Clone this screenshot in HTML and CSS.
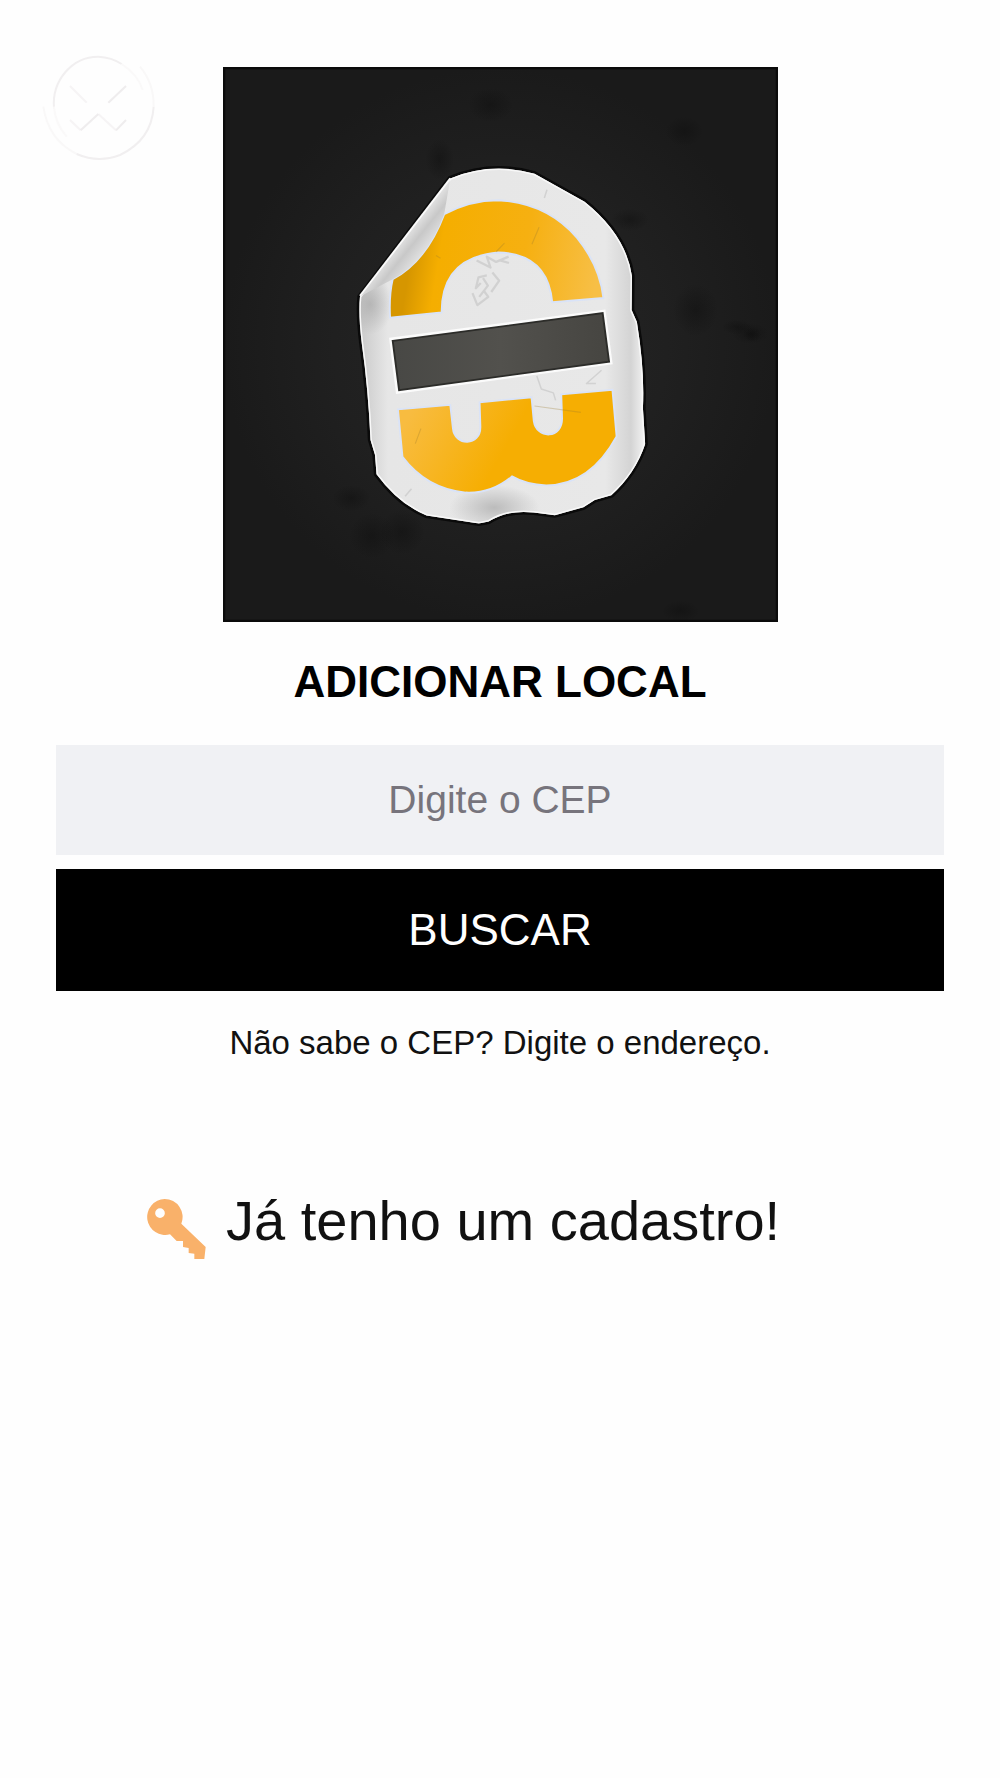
FILE: index.html
```html
<!DOCTYPE html>
<html lang="pt-br">
<head>
	<meta charset="UTF-8">
	<meta name="viewport" content="width=device-width, initial-scale=1">
	<title>Adicionar local</title>
	<link rel="stylesheet" href="styles.css">
</head>
<body>
	<main id="box">
		<div class="topo">
			<button type="button" class="fechar" aria-label="Fechar">
				<svg viewBox="78 48 282 312" fill="none" stroke-width="6">
					<path d="M72 205A133 142 0 0 1 205 50Q245 52 275 72" stroke="#f1eff0"/>
					<path d="M72 200Q75 250 110 290M275 72Q325 105 338 150" stroke="#faf9f9"/>
					<path d="M40 200Q55 300 140 342" stroke="#f9f8f8"/>
					<path d="M140 342Q205 370 270 345Q365 300 371 200" stroke="#f1eff0"/>
					<path d="M371 200Q372 130 330 80" stroke="#f9f8f8"/>
					<path d="M120 138L170 188M120 240L152 271M205 222L258 271" stroke="#f6f4f5"/>
					<path d="M235 188L288 138M152 271L205 222M258 271L288 240" stroke="#efedee"/>
				</svg>
			</button>
			<!-- logo: adesivo sobre fundo escuro -->
			<svg class="logo" viewBox="34 44 1475 1475" role="img" aria-label="Logo">
				<defs>
					<radialGradient id="fundo">
						<stop offset="0" stop-color="#262626"/>
						<stop offset="0.6" stop-color="#202020"/>
						<stop offset="1" stop-color="#1a1a1a"/>
					</radialGradient>
					<linearGradient id="papel">
						<stop offset="0" stop-color="#c9c9c9"/>
						<stop offset="0.1" stop-color="#e6e6e6"/>
						<stop offset="0.86" stop-color="#e8e8e8"/>
						<stop offset="0.95" stop-color="#d4d4d4"/>
						<stop offset="1" stop-color="#f4f4f4"/>
					</linearGradient>
					<linearGradient id="dobra" gradientUnits="userSpaceOnUse" x1="495" y1="490" x2="572" y2="552">
						<stop offset="0" stop-color="#f2f2f2"/>
						<stop offset="0.5" stop-color="#c8c8c8"/>
						<stop offset="1" stop-color="#e8e8e8"/>
					</linearGradient>
					<linearGradient id="arco" gradientUnits="userSpaceOnUse" x1="530" y1="570" x2="1020" y2="650">
						<stop offset="0" stop-color="#d69600"/>
						<stop offset="0.15" stop-color="#f5ae00"/>
						<stop offset="0.6" stop-color="#f6b011"/>
						<stop offset="1" stop-color="#f7bf46"/>
					</linearGradient>
					<linearGradient id="base" gradientUnits="userSpaceOnUse" x1="530" y1="970" x2="760" y2="1100">
						<stop offset="0" stop-color="#f8bc40"/>
						<stop offset="1" stop-color="#f6ae02"/>
					</linearGradient>
					<linearGradient id="barra">
						<stop offset="0" stop-color="#484845"/>
						<stop offset="0.5" stop-color="#52514d"/>
						<stop offset="1" stop-color="#464541"/>
					</linearGradient>
					<radialGradient id="sombra">
						<stop offset="0" stop-color="#a9a9a9" stop-opacity="0.7"/>
						<stop offset="1" stop-color="#a9a9a9" stop-opacity="0"/>
					</radialGradient>
					<radialGradient id="mancha">
						<stop offset="0" stop-color="#0c0c0c" stop-opacity="0.4"/>
						<stop offset="1" stop-color="#0c0c0c" stop-opacity="0"/>
					</radialGradient>
					<clipPath id="recorte">
						<path id="contorno" d="M638 340Q750 295 862 328L995 402Q1105 490 1121 600L1120 690L1134 722Q1155 850 1150 950L1156 1046Q1130 1125 1066 1182L1022 1195L992 1214L916 1235L860 1228Q790 1220 740 1252L714 1257L575 1236Q500 1205 442 1126L438 1075L426 1035Q420 900 403 780Q393 700 398 654Z"/>
					</clipPath>
				</defs>
				<path fill="url(#fundo)" d="M34 44H1509V1519H34z"/>
				<g fill="url(#mancha)">
					<ellipse cx="610" cy="290" rx="38" ry="55"/>
					<ellipse cx="1435" cy="752" rx="48" ry="28"/>
					<ellipse cx="1440" cy="755" rx="24" ry="20"/>
					<ellipse cx="1400" cy="735" rx="40" ry="20"/>
					<ellipse cx="1290" cy="690" rx="60" ry="70"/>
					<ellipse cx="1115" cy="450" rx="50" ry="30"/>
					<ellipse cx="430" cy="1290" rx="60" ry="60"/>
					<ellipse cx="375" cy="1190" rx="50" ry="35"/>
					<ellipse cx="510" cy="1280" rx="60" ry="60"/>
					<ellipse cx="745" cy="145" rx="60" ry="45"/>
					<ellipse cx="1250" cy="1490" rx="50" ry="28"/>
					<ellipse cx="1260" cy="215" rx="50" ry="40"/>
				</g>
				<!-- papel -->
				<use href="#contorno" fill="none" stroke="#0a0a0a" stroke-width="14"/>
				<use href="#contorno" fill="url(#papel)"/>
				<g clip-path="url(#recorte)">
					<ellipse cx="755" cy="1215" rx="120" ry="60" fill="url(#sombra)"/>
					<ellipse cx="425" cy="675" rx="60" ry="80" fill="url(#sombra)"/>
					<use href="#contorno" fill="none" stroke="#f8f8f8" stroke-width="8"/>
				</g>
				<!-- letra de cima -->
				<path fill="url(#arco)" stroke="#d9e3f8" stroke-width="5" d="M485 608Q575 560 622 435Q690 398 765 398Q895 405 975 498Q1035 572 1045 658L909 669Q897 540 765 537Q615 550 615 696L478 710Q475 650 485 608Z"/>
				<path fill="url(#dobra)" d="M638 340L622 435Q575 560 485 608L398 654Z"/>
				<path fill="none" stroke="#fafafa" stroke-width="5" d="M398 652L638 340"/>
				<!-- arranhados -->
				<g fill="none" stroke="#b8b8b8" stroke-width="6" stroke-linejoin="round" opacity="0.45">
					<path d="M708 558L745 577L735 548L760 562L793 548M750 590L768 612L747 642M735 598L713 603L706 632L719 618M697 645L710 677L739 655L728 640M770 558L794 565M725 605L738 625L715 655"/>
					<path stroke-width="4" d="M868 865L880 900L912 910L918 930M1040 850L1000 885L1025 885M895 370L888 392M535 1165L518 1185"/>
				</g>
				<!-- tarja -->
				<path fill="url(#barra)" stroke="#fbfbfb" stroke-width="12" d="M482 769L1045 695L1063 829L499 906Z"/>
				<path fill="url(#barra)" stroke="#2c2c29" stroke-width="5" d="M485 772L1043 698L1060 827L502 903Z"/>
				<!-- letra de baixo -->
				<path fill="url(#base)" stroke="#d9e3f8" stroke-width="5" d="M499 954L638 942L645 1004C649 1053 719 1053 718 1000L716 935L854 922L860 985C867 1034 938 1034 935 975L933 914L1069 902L1080 1026Q1010 1155 893 1156Q840 1154 802 1132Q748 1178 679 1175Q575 1165 511 1080Z"/>
				<path fill="none" stroke="#9b7b30" stroke-width="3" opacity="0.3" d="M862 945L985 962M560 1005L545 1045M782 512L760 535M874 470L855 515M600 545L612 552"/>
				<path fill="none" stroke="#0b0b0b" stroke-width="6" d="M37 47H1506V1516H37z"/>
			</svg>
		</div>
		<h1>ADICIONAR LOCAL</h1>
		<form>
			<input type="text" name="cep" class="campo" placeholder="Digite o CEP" aria-label="Digite o CEP">
			<button type="submit" class="buscar">BUSCAR</button>
		</form>
		<a href="#" class="endereco">Não sabe o CEP? Digite o endereço.</a>
		<a href="#" class="cadastro">
			<svg class="chave" viewBox="48 40 180 180" fill="#f9b16a">
				<path fill-rule="evenodd" d="M104 40A54 54 0 0 1 154 114L227 184L223 220H193V204L176 202V187L159 184V166H140L120 146A54 54 0 1 1 104 40ZM90 68A14 14 0 1 0 90 97A14 14 0 1 0 90 68Z"/>
			</svg>
			<span>Já tenho um cadastro!</span>
		</a>
	</main>
</body>
</html>
```
FILE: styles.css
```css
body {
	margin: 0;
	background: #fefefe;
	color: #111;
	font-family: "Liberation Sans", Arial, sans-serif;
}
a {
	color: inherit;
	text-decoration: none;
}
svg {
	display: block;
}
#box {
	padding: 56px;
}
.topo {
	display: grid;
	grid-template-columns: 3fr 10fr 3fr;
	align-items: start;
}
.fechar {
	width: 94px;
	padding: 0;
	border: 0;
	background: none;
	cursor: pointer;
}
.fechar svg {
	width: 100%;
	overflow: visible;
}
.logo {
	width: 100%;
	margin-top: 11px;
}
h1 {
	margin: 35px 0 38px;
	font-size: 44px;
	line-height: 50px;
	text-align: center;
	color: #000;
}
form {
	display: flex;
	flex-direction: column;
	gap: 14px;
}
.campo,
.buscar {
	box-sizing: border-box;
	width: 100%;
	padding: 0;
	border: 0;
	border-radius: 0;
	font-family: inherit;
	text-align: center;
}
.campo {
	height: 110px;
	background: #f0f1f4;
	font-size: 39px;
}
.campo::placeholder {
	color: #77747c;
	opacity: 1;
}
.buscar {
	height: 122px;
	background: #000;
	color: #fff;
	font-size: 44px;
	cursor: pointer;
}
.endereco {
	display: block;
	margin-top: 32px;
	font-size: 33px;
	line-height: 40px;
	text-align: center;
}
.cadastro {
	display: flex;
	align-items: flex-end;
	gap: 20px;
	margin: 120px 0 0 90px;
	font-size: 56px;
	line-height: 76px;
}
.chave {
	flex: none;
	width: 60px;
}
```
